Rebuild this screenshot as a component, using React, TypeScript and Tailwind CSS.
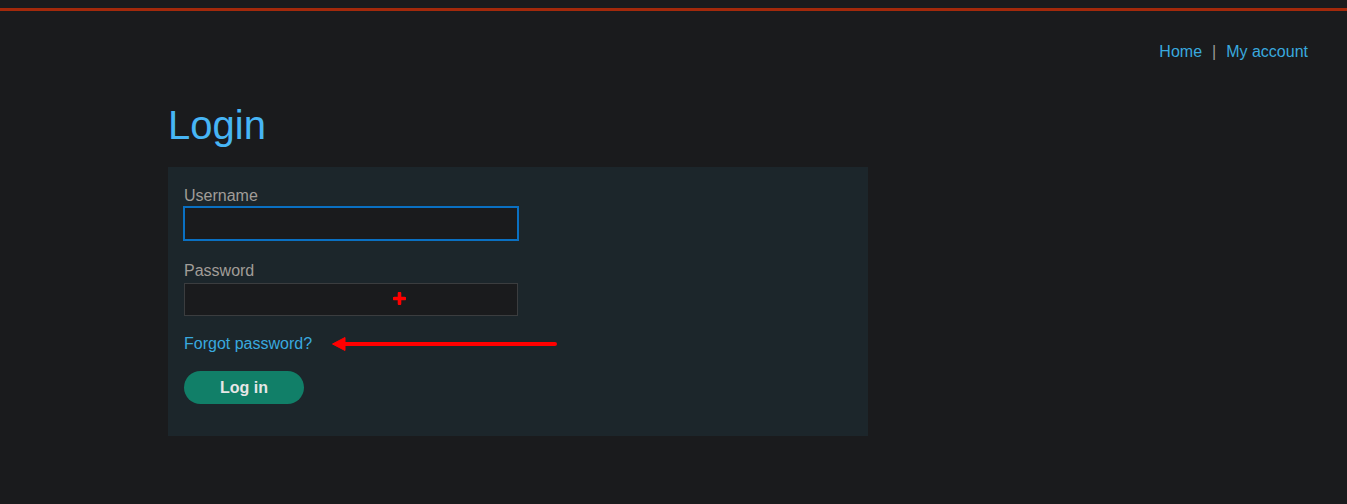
export default function App() {
  return (
    <div
      className="min-h-[504px] bg-[#1a1b1d] text-[16px]"
      style={{ fontFamily: '"Liberation Sans", Arial, sans-serif' }}
    >
      {/* Top accent bar */}
      <div className="pt-[8px]">
        <div className="h-[3px] bg-[#a3290b]" />
      </div>

      {/* Header nav */}
      <nav className="mt-[32px] flex justify-end pr-[39px] leading-[18px]">
        <a href="#" className="text-[#39a9df]">Home</a>
        <span className="mx-[10px] text-[#9a9a9a]">|</span>
        <a href="#" className="text-[#39a9df]">My account</a>
      </nav>

      <main className="ml-[168px] mt-[41px] w-[700px]">
        <h1 className="text-[40px] leading-[46px] text-[#47b5f5]">Login</h1>

        <form
          className="mt-[19px] bg-[#1c262b] px-[16px] pt-[20px] pb-[32px]"
          onSubmit={(e) => e.preventDefault()}
        >
          <label className="mb-[2px] block leading-[18px] text-[#a19d98]">Username</label>
          <input
            type="text"
            className="block h-[33px] w-[334px] border border-[#0a70c2] bg-[#1a1b1d] text-[#ddd] shadow-[0_0_0_1px_#0a70c2] outline-none"
          />

          <label className="mt-[22px] mb-[3px] block leading-[18px] text-[#a19d98]">Password</label>
          <div className="relative w-[334px]">
            <input
              type="password"
              className="block h-[33px] w-[334px] border border-[#3b3d3f] bg-[#1a1b1d] text-[#ddd] outline-none"
            />
            {/* Cursor marker */}
            <svg
              className="pointer-events-none absolute left-[209px] top-[9px]"
              width="13"
              height="13"
              viewBox="0 0 13 13"
            >
              <path d="M6.5 1.5v10M1.5 6.5h10" stroke="#ff0000" strokeWidth="3.6" strokeLinecap="round" />
            </svg>
          </div>

          <div className="mt-[19px] flex h-[18px] items-center leading-[18px]">
            <a href="#" className="text-[#39a9df]">Forgot password?</a>
            <svg className="ml-[20px]" width="226" height="16" viewBox="0 0 226 16">
              <path d="M8 8H223" stroke="#ff0000" strokeWidth="4" strokeLinecap="round" />
              <path d="M0.5 8L13 1.5V14.5Z" fill="#ff0000" stroke="#ff0000" strokeWidth="1" strokeLinejoin="round" />
            </svg>
          </div>

          <button
            type="submit"
            className="mt-[18px] block h-[33px] w-[120px] rounded-full bg-[#117f68] font-bold text-[#e6e6e6]"
          >
            Log in
          </button>
        </form>
      </main>
    </div>
  );
}
